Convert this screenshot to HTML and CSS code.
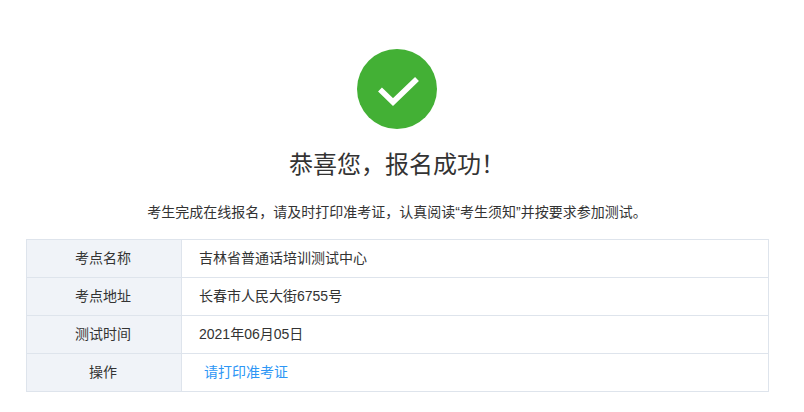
FILE: index.html

```html
<!DOCTYPE html>
<html lang="zh-CN">
<head>
    <meta charset="UTF-8">
    <title>报名成功</title>
    <link rel="stylesheet" href="styles.css">
</head>
<body>
    <div class="result">
        <svg class="success-icon" width="80" height="80" viewBox="0 0 80 80">
            <circle cx="40" cy="40" r="40" fill="#43b035"/>
            <path d="M23 40.5 L36 53 L60 30" fill="none" stroke="#fff" stroke-width="5.6"/>
        </svg>
        <h1>恭喜您，报名成功！</h1>
        <p class="tip">考生完成在线报名，请及时打印准考证，认真阅读“考生须知”并按要求参加测试。</p>
    </div>
    <table class="info-table">
        <tr>
            <th>考点名称</th>
            <td>吉林省普通话培训测试中心</td>
        </tr>
        <tr>
            <th>考点地址</th>
            <td>长春市人民大街6755号</td>
        </tr>
        <tr>
            <th>测试时间</th>
            <td>2021年06月05日</td>
        </tr>
        <tr>
            <th>操作</th>
            <td><a class="print-link" href="#">请打印准考证</a></td>
        </tr>
    </table>
</body>
</html>
```

FILE: styles.css

```css
body {
    margin: 0;
    padding: 49px 35px 20px 26px;
    background-color: #fff;
    color: #333;
    font-family: "Liberation Sans", "Noto Sans CJK SC", sans-serif;
    font-size: 14px;
}
.result {
    padding-right: 1px;
    text-align: center;
}
.success-icon {
    display: block;
    margin: 0 auto;
}
h1 {
    margin: 19px 0 0;
    font-size: 24px;
    font-weight: normal;
    line-height: 34px;
}
.tip {
    margin: 20px 0 0;
    font-size: 14px;
    line-height: 20px;
}
.info-table {
    width: 743px;
    margin-top: 17px;
    border-collapse: collapse;
    table-layout: fixed;
}
.info-table th, .info-table td {
    height: 35px;
    padding: 0 0 2px;
    border: 1px solid #dee4ec;
    font-weight: normal;
    line-height: 20px;
}
.info-table th {
    width: 152px;
    padding-right: 2px;
    background-color: #f0f3f8;
    text-align: center;
}
.info-table td {
    padding-left: 17px;
    text-align: left;
}
.print-link {
    margin-left: 5px;
    color: #2d96f5;
    text-decoration: none;
}
```
